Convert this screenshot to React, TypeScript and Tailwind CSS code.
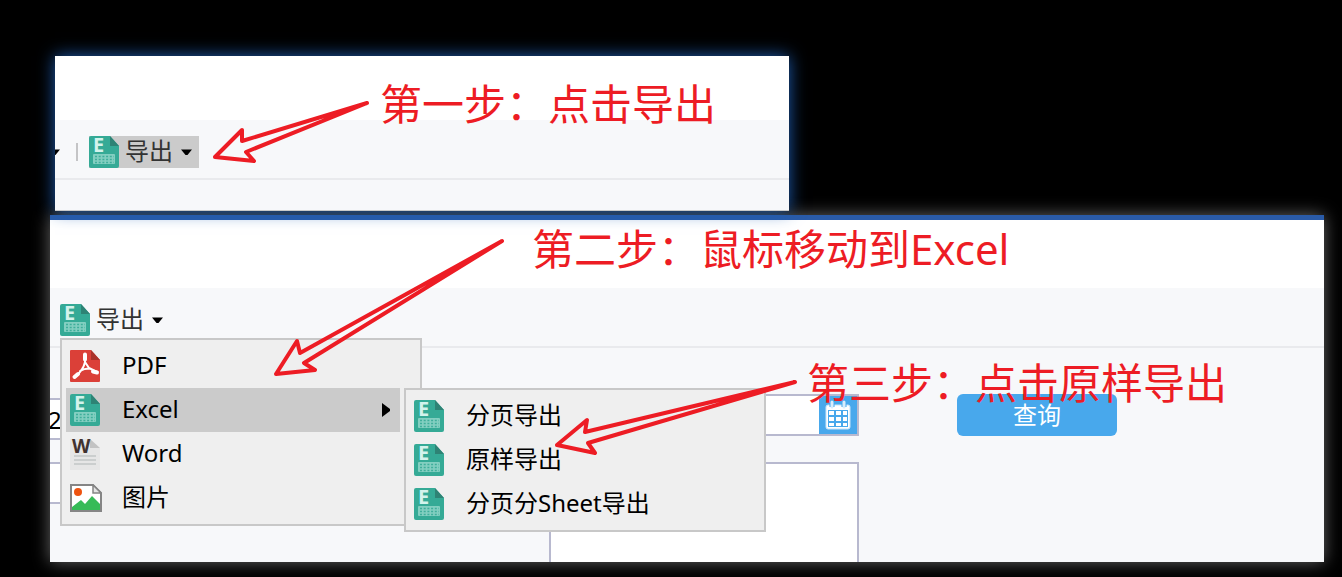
import type { ReactNode } from "react"

function ExcelIcon() {
  return (
    <svg width="30" height="32" viewBox="0 0 30 32" className="shrink-0 overflow-visible" aria-hidden="true">
      <path d="M2 0H21L30 10V30a2 2 0 0 1-2 2H2a2 2 0 0 1-2-2V2a2 2 0 0 1 2-2z" fill="#35aa96" />
      <path d="M21 0L30 10H21z" fill="#2e8375" />
      <text x="4" y="16" fontSize="20" fontWeight="700" fontFamily="Open Sans, sans-serif" fill="#d3f3ec">
        E
      </text>
      <rect x="4" y="18" width="22" height="10" rx="1" fill="#83cfc1" />
      <path
        d="M6 20.5H25M6 23.5H25M6 26.5H25"
        stroke="#3fae9b"
        strokeWidth="1.5"
        strokeDasharray="2 1.7"
      />
    </svg>
  )
}

function PdfIcon() {
  return (
    <svg width="30" height="32" viewBox="0 0 30 32" className="shrink-0" aria-hidden="true">
      <path d="M1 0H21L30 10V31a1 1 0 0 1-1 1H1a1 1 0 0 1-1-1V1a1 1 0 0 1 1-1z" fill="#db4038" />
      <path d="M21 0L30 10H21z" fill="#a93229" />
      <g fill="none" stroke="#fff" strokeLinecap="round" strokeLinejoin="round">
        <path d="M15 4v8L19 18l8 4M15 12c-1 5-4 10-10 15M10 21c3-2 6-2.500 10-2.500" strokeWidth="2" />
        <path d="M15 4.500v5M4.500 27l3.500-3M23 21.500l4 1" strokeWidth="4" />
      </g>
    </svg>
  )
}

function WordIcon() {
  return (
    <svg width="30" height="32" viewBox="0 0 30 32" className="shrink-0 overflow-visible" aria-hidden="true">
      <path d="M0 1H20L30 10V32H0z" fill="#e6e6e6" />
      <path d="M20 1L30 10H20z" fill="#c3c3c3" />
      <text x="2" y="15" fontSize="19" fontWeight="700" fontFamily="Open Sans, sans-serif" fill="#41322f">
        W
      </text>
      <path d="M4 18H26M4 22H26M4 26H26" stroke="#c2c6c6" strokeWidth="1.500" />
    </svg>
  )
}

function PictureIcon() {
  return (
    <svg width="32" height="28" viewBox="0 0 32 28" className="-mr-0.5 shrink-0" aria-hidden="true">
      <path d="M1 1H23L31 9V27H1z" fill="#fff" stroke="#858585" strokeWidth="2" />
      <path d="M2 26V23l9-7 4 4 7-8 8 8v6z" fill="#36bb57" />
      <circle cx="8" cy="8" r="4" fill="#ee5310" />
      <path d="M23 1V9H31z" fill="#e4e4e4" stroke="#858585" strokeWidth="1.500" />
    </svg>
  )
}

function CalendarIcon() {
  return (
    <svg width="28" height="30" viewBox="0 0 28 30" aria-hidden="true">
      <rect x="2" y="5" width="24" height="24" rx="2" fill="#fff" stroke="#c5e3fa" />
      <path d="M8 1v6M20 1v6" stroke="#48a8ec" strokeWidth="5" />
      <path d="M8 2v5M20 2v5" stroke="#d9edfc" strokeWidth="3" strokeLinecap="round" />
      <rect x="4" y="10" width="20" height="17" fill="#48a8ec" />
      <path
        d="M5 11h5v4H5zM12 11h5v4h-5zM19 11h4v4h-4zM5 17h5v4H5zM12 17h5v4h-5zM19 17h4v4h-4zM5 23h5v3H5zM12 23h5v3h-5zM19 23h4v3h-4z"
        fill="#fff"
      />
    </svg>
  )
}

function Caret() {
  return (
    <svg width="11" height="7" viewBox="0 0 11 7" aria-hidden="true">
      <path d="M0 0.500H11L6.500 6h-2z" fill="#000" />
    </svg>
  )
}

function ExportButton({ className = "" }: { className?: string }) {
  return (
    <button className={`flex h-8 items-center text-2xl leading-8 text-[#333] ${className}`}>
      <ExcelIcon />
      <span className="ml-1.5 mr-2 pb-0.5">导出</span>
      <Caret />
    </button>
  )
}

function MenuItem({ icon, label }: { icon: ReactNode; label: string }) {
  return (
    <li>
      <button className="flex h-11 w-full items-center gap-[22px] pl-1 text-left">
        {icon}
        <span className="pb-0.5">{label}</span>
      </button>
    </li>
  )
}

function SubMenu() {
  return (
    <ul className="absolute left-full top-0 ml-1 w-[362px] border-2 border-[#c8c8c8] bg-[#efefef] p-1">
      <MenuItem icon={<ExcelIcon />} label="分页导出" />
      <MenuItem icon={<ExcelIcon />} label="原样导出" />
      <MenuItem icon={<ExcelIcon />} label="分页分Sheet导出" />
    </ul>
  )
}

function ExportMenu() {
  return (
    <ul className="absolute left-0 top-full z-10 mt-0.5 w-[362px] border-2 border-[#c8c8c8] bg-[#efefef] py-1 pl-1 pr-5 text-2xl text-black">
      <MenuItem icon={<PdfIcon />} label="PDF" />
      <li className="relative bg-[#cbcbcb]">
        <button className="flex h-11 w-full items-center gap-[22px] pl-1 pr-2.5 text-left">
          <ExcelIcon />
          <span className="pb-0.5">Excel</span>
          <svg width="8" height="14" viewBox="0 0 8 14" className="ml-auto" aria-hidden="true">
            <path d="M0 0L8 6v2L0 14z" fill="#000" />
          </svg>
        </button>
        <SubMenu />
      </li>
      <MenuItem icon={<WordIcon />} label="Word" />
      <MenuItem icon={<PictureIcon />} label="图片" />
    </ul>
  )
}

type StepProps = {
  label: string
  labelClass: string
  arrowClass: string
  viewBox: string
  points: string
}

// Red hand-drawn style arrow with its caption, laid over the panels
function Step({ label, labelClass, arrowClass, viewBox, points }: StepProps) {
  return (
    <>
      <svg viewBox={viewBox} className={`pointer-events-none absolute z-30 ${arrowClass}`} aria-hidden="true">
        <polygon points={points} fill="none" stroke="#ed1c24" strokeWidth="4" strokeLinejoin="round" />
      </svg>
      <p className={`absolute z-30 whitespace-nowrap text-[42px] leading-[48px] text-[#ed1c24] ${labelClass}`}>
        {label}
      </p>
    </>
  )
}

export default function App() {
  return (
    <div className="relative flex min-h-screen flex-col overflow-hidden bg-black pb-[15px] pl-[50px] pr-[18px] pt-14 font-['Noto_Sans','Noto_Sans_CJK_SC',sans-serif]">
      {/* Step one: toolbar only */}
      <section className="relative z-10 ml-[5px] max-w-[734px] bg-[#f7f8fa] shadow-[0_0_16px_#1e5eb4]">
        <div className="h-16 bg-white" />
        <div className="flex h-[60px] items-start overflow-hidden border-b-2 border-[#e9eaed] pt-4">
          <div className="flex h-8 items-center">
            <div className="-ml-1.5">
              <Caret />
            </div>
            <div className="ml-4 mr-[11px] h-[18px] w-0.5 bg-[#c4c4c6]" />
          </div>
          <ExportButton className="bg-[#cbcbcb] pr-[7px]" />
        </div>
        <div className="h-[31px] border-b border-[#c9c9c9]" />
      </section>

      {/* Step two and three: opened menu over the query form */}
      <section className="mt-1 flex flex-1 flex-col border-t-[5px] border-[#2a5ba8] bg-[#f7f8fa] shadow-[0_0_16px_#666]">
        <div className="h-[68px] bg-white" />
        <div className="h-[60px] border-b-2 border-[#e9eaed] pl-2.5 pt-4">
          <div className="relative w-fit">
            <ExportButton />
            <ExportMenu />
          </div>
        </div>
        <form className="flex flex-1 items-start">
          <div className="flex w-[499px] flex-col gap-[22px] overflow-hidden pt-[50px]">
            <input
              aria-label="开始日期"
              defaultValue="2"
              className="-ml-1 h-[42px] w-[340px] border-2 border-[#b8b9cf] bg-white text-2xl text-black"
            />
            <input aria-label="条件" className="-ml-1 h-[42px] w-[340px] border-2 border-[#b8b9cf] bg-white" />
          </div>
          <div className="flex w-[310px] flex-col gap-[26px] self-stretch pt-[46px]">
            <div className="flex h-[42px] border-2 border-[#b8b9cf] bg-white">
              <input aria-label="结束日期" className="min-w-0 flex-1" />
              <button
                type="button"
                aria-label="选择日期"
                className="flex w-[38px] items-center justify-center bg-[#48a8ec]"
              >
                <CalendarIcon />
              </button>
            </div>
            <textarea
              aria-label="内容"
              className="min-h-[100px] flex-1 resize-none border-2 border-b-0 border-[#b8b9cf] bg-white"
            />
          </div>
          <button
            type="button"
            className="ml-[98px] mt-[46px] h-[42px] w-40 rounded-md bg-[#48a8ec] text-2xl text-white"
          >
            查询
          </button>
        </form>
      </section>

      <Step
        label="第一步：点击导出"
        labelClass="left-[380px] top-[80px]"
        arrowClass="left-[210px] top-[98px] w-[162px] h-[68px]"
        viewBox="210 98 162 68"
        points="215,157 242,130 242,141 367,103 246,152 254,161"
      />
      <Step
        label="第二步：鼠标移动到Excel"
        labelClass="left-[532px] top-[225px]"
        arrowClass="left-[270px] top-[236px] w-[238px] h-[142px]"
        viewBox="270 236 238 142"
        points="276,374 297,341 300,353 502,241 304,363 315,370"
      />
      <Step
        label="第三步：点击原样导出"
        labelClass="left-[807px] top-[359px]"
        arrowClass="left-[552px] top-[378px] w-[248px] h-[80px]"
        viewBox="552 378 248 80"
        points="557,445 587,420 585,432 795,382 588,443 595,453"
      />
    </div>
  )
}
